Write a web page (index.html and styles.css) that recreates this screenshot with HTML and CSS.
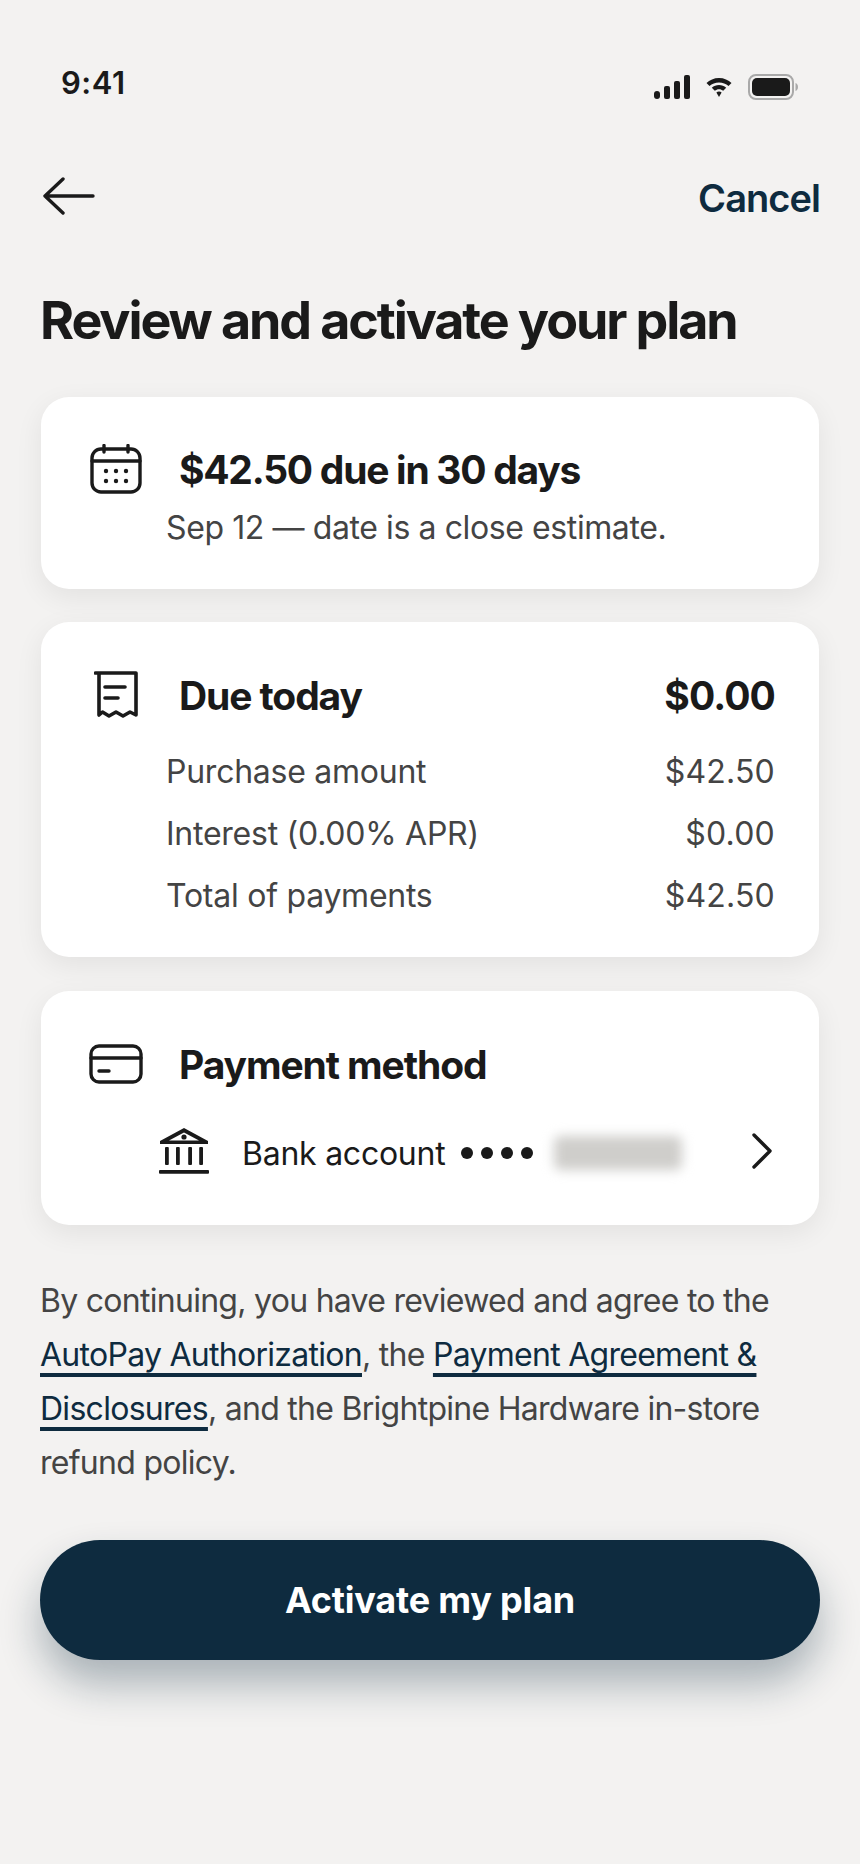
FILE: index.html
```html
<!DOCTYPE html>
<html lang="en">
<head>
    <meta charset="UTF-8">
    <meta name="viewport" content="width=device-width, initial-scale=1.0">
    <title>Review and activate your plan</title>
    <link rel="stylesheet" href="styles.css">
</head>
<body>
    <div class="status-bar">
        <span class="time">9:41</span>
        <div class="status-icons">
            <svg width="36" height="24" viewBox="0 0 36 24" fill="#1a1a1a">
                <rect x="0" y="16" width="6" height="8" rx="3"/>
                <rect x="10" y="11" width="6" height="13" rx="2"/>
                <rect x="20" y="6" width="6" height="18" rx="2"/>
                <rect x="30" y="0" width="6" height="24" rx="2"/>
            </svg>
            <svg width="26" height="20" viewBox="0 0 26 20" fill="#1a1a1a">
                <path d="M13 1C8 1 3.500 3 0.500 6L3.500 9C6 6.800 9.300 5.400 13 5.400S20 6.800 22.500 9L25.500 6C22.500 3 18 1 13 1Z"/>
                <path d="M13 8C10.300 8 7.800 9 5.800 10.800L8.800 13.800C10 12.900 11.400 12.300 13 12.300S16 12.900 17.200 13.800L20.200 10.800C18.200 9 15.700 8 13 8Z"/>
                <path d="M13 14.500C12 14.500 11.100 14.800 10.400 15.400L13 20L15.600 15.400C14.900 14.800 14 14.500 13 14.500Z"/>
            </svg>
            <svg width="50" height="26" viewBox="0 0 50 26">
                <rect x="1" y="1" width="44" height="24" rx="7" fill="none" stroke="#a9a9a9" stroke-width="2"/>
                <rect x="4" y="4" width="38" height="18" rx="5" fill="#1a1a1a"/>
                <path d="M47.500 9C49 9.500 50 11 50 13S49 16.500 47.500 17Z" fill="#a9a9a9"/>
            </svg>
        </div>
    </div>

    <nav class="top-nav">
        <svg class="back-icon" width="52" height="38" viewBox="0 0 52 38" fill="none" stroke="#1a1a1a" stroke-width="3.400" stroke-linecap="round" stroke-linejoin="round">
            <path d="M50 19H2M20 2L2 19L20 36"/>
        </svg>
        <a class="cancel" href="#">Cancel</a>
    </nav>

    <h1 class="page-title">Review and activate your plan</h1>

    <section class="card card-due">
        <div class="card-head">
            <span class="icon-slot">
                <svg width="52" height="50" viewBox="0 0 52 50" fill="none" stroke="#1a1a1a" stroke-width="3.400" stroke-linecap="round">
                    <rect x="2" y="5" width="48" height="43" rx="9"/>
                    <path d="M2 17H50M14 1.500V8M38 1.500V8"/>
                    <g fill="#1a1a1a" stroke="none">
                        <circle cx="16" cy="27" r="2.200"/><circle cx="26" cy="27" r="2.200"/><circle cx="36" cy="27" r="2.200"/>
                        <circle cx="16" cy="37" r="2.200"/><circle cx="26" cy="37" r="2.200"/><circle cx="36" cy="37" r="2.200"/>
                    </g>
                </svg>
            </span>
            <h2 class="card-title">$42.50 due in 30 days</h2>
        </div>
        <p class="due-note">Sep 12 — date is a close estimate.</p>
    </section>

    <section class="card card-today">
        <div class="card-head">
            <span class="icon-slot">
                <svg width="44" height="48" viewBox="0 0 44 48" fill="none" stroke="#1a1a1a" stroke-width="3.600" stroke-linecap="round" stroke-linejoin="round">
                    <path d="M1.500 2H42V44L36 41L29 45L22 41L15 45L8.500 41L5 44V2"/>
                    <path d="M11 16H31M11 27H24"/>
                </svg>
            </span>
            <h2 class="card-title">Due today</h2>
            <span class="card-total">$0.00</span>
        </div>
        <div class="rows">
            <div class="row"><span>Purchase amount</span><span class="amount">$42.50</span></div>
            <div class="row"><span>Interest (0.00% APR)</span><span class="amount">$0.00</span></div>
            <div class="row"><span>Total of payments</span><span class="amount">$42.50</span></div>
        </div>
    </section>

    <section class="card card-method">
        <div class="card-head">
            <span class="icon-slot">
                <svg width="54" height="40" viewBox="0 0 54 40" fill="none" stroke="#1a1a1a" stroke-width="3.400" stroke-linecap="round">
                    <rect x="2" y="2" width="50" height="36" rx="8"/>
                    <path d="M2 14H52M10 27H20"/>
                </svg>
            </span>
            <h2 class="card-title">Payment method</h2>
        </div>
        <div class="bank-row">
            <svg class="bank-icon" width="50" height="46" viewBox="0 0 50 46" fill="#1a1a1a">
                <path d="M25 0L49 13V16H1V13ZM25 4.500L10 12.600H40Z" fill-rule="evenodd"/>
                <circle cx="25" cy="9" r="2.600"/>
                <rect x="6" y="19" width="3.800" height="18" rx="1"/>
                <rect x="17" y="19" width="3.800" height="18" rx="1"/>
                <rect x="29.200" y="19" width="3.800" height="18" rx="1"/>
                <rect x="40.200" y="19" width="3.800" height="18" rx="1"/>
                <rect x="0" y="42" width="50" height="3.800" rx="1"/>
            </svg>
            <span class="bank-name">Bank account</span>
            <span class="dots"><i></i><i></i><i></i><i></i></span>
            <span class="masked"></span>
            <svg class="chevron" width="22" height="38" viewBox="0 0 22 38" fill="none" stroke="#1a1a1a" stroke-width="3.400" stroke-linecap="round" stroke-linejoin="round">
                <path d="M3 3L19 19L3 35"/>
            </svg>
        </div>
    </section>

    <p class="legal">By continuing, you have reviewed and agree to the <a href="#">AutoPay Authorization</a>, the <a href="#">Payment Agreement &amp; Disclosures</a>, and the Brightpine Hardware in-store refund policy.</p>

    <button class="activate">Activate my plan</button>
</body>
</html>
```

FILE: styles.css
```css
* {
    box-sizing: border-box;
}
body {
    margin: 0;
    height: 1864px;
    padding: 0 40px;
    overflow: hidden;
    background: #f3f2f1;
    color: #1a1a1a;
    font-family: Inter, "Liberation Sans", sans-serif;
}
.status-bar {
    display: flex;
    justify-content: space-between;
    align-items: flex-start;
    padding: 65px 22px 0 21px;
    height: 160px;
}
.time {
    font-size: 31px;
    line-height: 36px;
    font-weight: 600;
    letter-spacing: 0.5px;
}
.status-icons {
    display: flex;
    align-items: center;
    gap: 16px;
    margin-top: 9px;
}
.top-nav {
    display: flex;
    justify-content: space-between;
    align-items: center;
    height: 70px;
    padding-top: 2px;
}
.back-icon {
    margin-left: 3px;
}
.cancel {
    margin-top: 4px;
    color: #0e2b3f;
    font-size: 38px;
    font-weight: 600;
    letter-spacing: -0.95px;
    text-decoration: none;
}
.page-title {
    margin: 62px 0 47px;
    font-size: 52px;
    line-height: 58px;
    font-weight: 700;
    letter-spacing: -2.1px;
}
.card {
    margin: 0 1px 33px;
    padding: 50px 44px 0 48px;
    background: #fff;
    border-radius: 28px;
    box-shadow: 0 8px 28px rgba(0, 0, 0, 0.07);
}
.card-due {
    height: 192px;
    padding-top: 49px;
}
.card-due .card-title {
    letter-spacing: -1.27px;
}
.card-today {
    height: 335px;
    margin-bottom: 34px;
}
.card-method {
    height: 234px;
    margin-bottom: 0;
}
.card-head {
    display: flex;
    align-items: center;
    height: 46px;
}
.icon-slot {
    display: flex;
    justify-content: center;
    width: 54px;
    margin-right: 36px;
}
.card-title {
    margin: 0;
    flex: 1;
    font-size: 39px;
    font-weight: 700;
    letter-spacing: -1.1px;
}
.card-total {
    font-size: 39px;
    font-weight: 700;
    letter-spacing: -0.9px;
}
.due-note {
    margin: 16px 0 0 77px;
    color: #444;
    font-size: 32px;
    line-height: 40px;
    letter-spacing: -0.4px;
}
.rows {
    margin: 23px 0 0 77px;
    color: #444;
    font-size: 32px;
    line-height: 62px;
    letter-spacing: -0.25px;
}
.row {
    display: flex;
    justify-content: space-between;
}
.amount {
    letter-spacing: 0.2px;
}
.bank-row {
    display: flex;
    align-items: center;
    margin: 41px 0 0 70px;
    font-size: 32px;
    letter-spacing: -0.25px;
}
.bank-name {
    margin: 4px 0 0 33px;
}
.dots {
    display: flex;
    gap: 8px;
    margin: 4px 0 0 16px;
}
.dots i {
    width: 12px;
    height: 12px;
    border-radius: 50%;
    background: #1a1a1a;
}
.masked {
    width: 128px;
    height: 34px;
    margin: 4px 0 0 21px;
    background: #cfcecb;
    border-radius: 6px;
    filter: blur(6px);
}
.chevron {
    margin-left: auto;
    margin-right: 2px;
}
.legal {
    margin: 49px 0 0;
    color: #444;
    font-size: 32px;
    line-height: 54px;
    letter-spacing: -0.72px;
}
.legal a {
    color: #0e2b3f;
    text-decoration: underline;
    text-decoration-thickness: 4px;
    text-decoration-skip-ink: none;
    text-underline-offset: 7px;
}
.activate {
    display: block;
    width: 100%;
    height: 120px;
    margin-top: 50px;
    border: none;
    border-radius: 60px;
    background: #0e2b3f;
    color: #fff;
    font-family: inherit;
    font-size: 36px;
    font-weight: 700;
    letter-spacing: -0.2px;
    box-shadow: 0 24px 40px rgba(14, 43, 63, 0.32);
}
```
